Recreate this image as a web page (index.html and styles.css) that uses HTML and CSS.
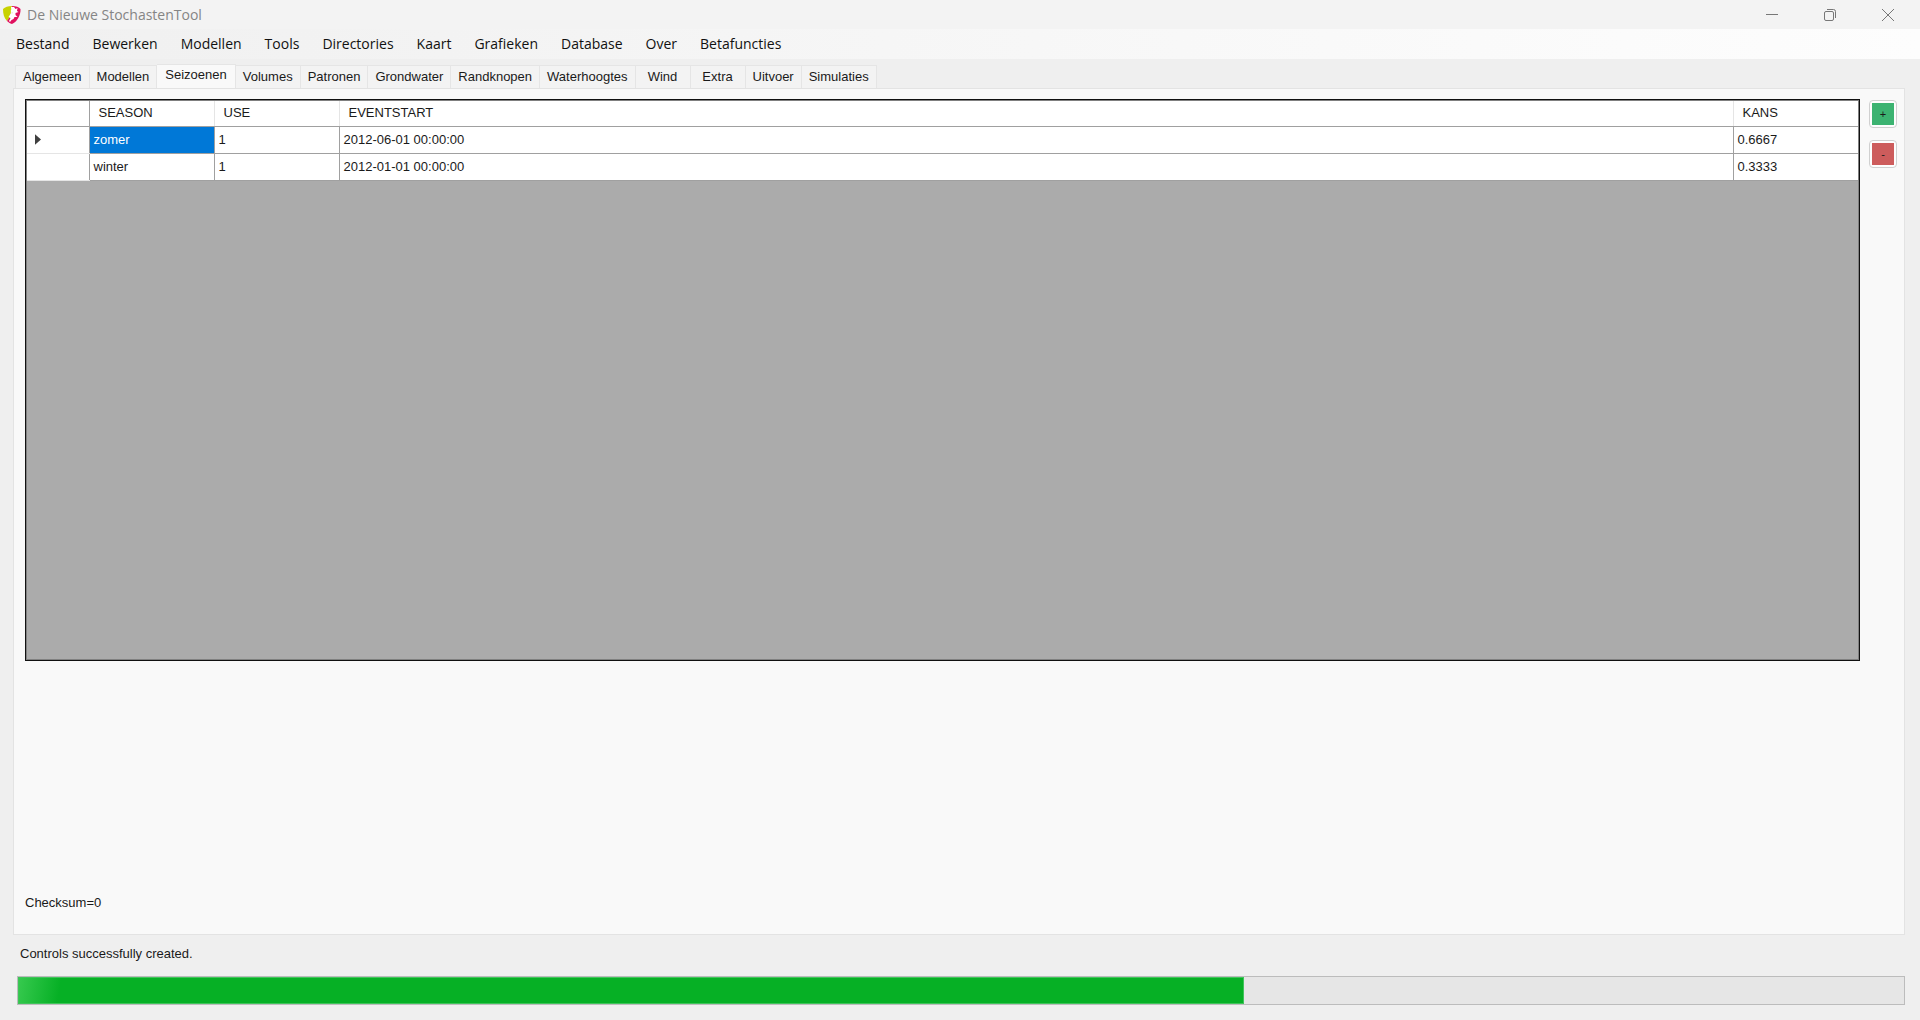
FILE: index.html
```html
<!DOCTYPE html>
<html lang="nl">
<head>
<meta charset="utf-8">
<title>De Nieuwe StochastenTool</title>
<link rel="stylesheet" href="styles.css">
</head>
<body>
<div class="window">
  <header class="titlebar">
    <svg class="logo" viewBox="0 0 18 20" aria-hidden="true">
      <path d="M9 1C5 1 2 2 0 4c0 5 1 9 4 12l3-4z" fill="#c8d200"/>
      <path d="M9 1c4 0 7 1 8.500 3C18 10 14 17 9 19c-2-.5-4-2-5-3l5-7z" fill="#e0115f"/>
      <path d="M8 2l3 0 1.500 2 2-1-.5 3 1.500 1-3 1 0 2 2 2-3 0-1 2-2 1-1.500 2-1-1 1.500-3-2-1 2-3 2-1-2-2 1-1z" fill="#fff"/>
    </svg>
    <h1 class="title">De Nieuwe StochastenTool</h1>
    <div class="caption-buttons">
      <button class="caption-button" aria-label="Minimaliseren"><svg viewBox="0 0 14 14"><path d="M1 6.500h12"/></svg></button>
      <button class="caption-button" aria-label="Verkleinen"><svg viewBox="0 0 14 14"><rect x="1.500" y="3.500" width="9" height="9" rx="1.500"/><path d="M4 1.500h6.500a2 2 0 0 1 2 2V10"/></svg></button>
      <button class="caption-button" aria-label="Sluiten"><svg viewBox="0 0 14 14"><path d="M1 1l12 12M13 1L1 13"/></svg></button>
    </div>
  </header>
  <nav class="menubar" aria-label="Menu">
    <button class="menu-item">Bestand</button>
    <button class="menu-item">Bewerken</button>
    <button class="menu-item">Modellen</button>
    <button class="menu-item">Tools</button>
    <button class="menu-item">Directories</button>
    <button class="menu-item">Kaart</button>
    <button class="menu-item">Grafieken</button>
    <button class="menu-item">Database</button>
    <button class="menu-item">Over</button>
    <button class="menu-item">Betafuncties</button>
  </nav>
  <main class="content">
    <div class="tabs" role="tablist">
      <button class="tab" role="tab">Algemeen</button>
      <button class="tab" role="tab">Modellen</button>
      <button class="tab tab-selected" role="tab" aria-selected="true">Seizoenen</button>
      <button class="tab" role="tab">Volumes</button>
      <button class="tab" role="tab">Patronen</button>
      <button class="tab" role="tab">Grondwater</button>
      <button class="tab" role="tab">Randknopen</button>
      <button class="tab" role="tab">Waterhoogtes</button>
      <button class="tab" role="tab">Wind</button>
      <button class="tab" role="tab">Extra</button>
      <button class="tab" role="tab">Uitvoer</button>
      <button class="tab" role="tab">Simulaties</button>
    </div>
    <section class="panel" role="tabpanel">
      <div class="editor">
        <div class="grid">
          <table class="seasons">
            <colgroup><col class="col-marker"><col class="col-value"><col class="col-value"><col><col class="col-value"></colgroup>
            <thead>
              <tr><td></td><th scope="col">SEASON</th><th scope="col">USE</th><th scope="col">EVENTSTART</th><th scope="col">KANS</th></tr>
            </thead>
            <tbody>
              <tr><td class="marker"><svg class="arrow" viewBox="0 0 7 12" aria-hidden="true"><path d="M0 0l7 6-7 6z"/></svg></td><td class="cell-selected">zomer</td><td>1</td><td>2012-06-01 00:00:00</td><td>0.6667</td></tr>
              <tr><td class="marker"></td><td>winter</td><td>1</td><td>2012-01-01 00:00:00</td><td>0.3333</td></tr>
            </tbody>
          </table>
        </div>
        <div class="row-actions">
          <button class="action"><span class="face face-add">+</span></button>
          <button class="action"><span class="face face-remove">-</span></button>
        </div>
      </div>
      <p class="checksum">Checksum=0</p>
    </section>
  </main>
  <footer class="status">
    <p class="message" id="message">Controls successfully created.</p>
    <div class="progress" role="progressbar" aria-labelledby="message" aria-valuenow="65"><div class="progress-fill" style="width: 65%"></div></div>
  </footer>
</div>
</body>
</html>
```
FILE: styles.css
```css
* { box-sizing: border-box; }
body {
  margin: 0;
  background: #efefef;
  color: #1a1a1a;
  font: 13px/16px "Liberation Sans", Arial, sans-serif;
}
button {
  margin: 0;
  border: 0;
  padding: 0;
  background: none;
  color: inherit;
  font: inherit;
}
p { margin: 0; }
.window { display: flex; flex-direction: column; min-height: 100vh; }

.titlebar { display: flex; align-items: center; height: 29px; padding-left: 3px; background: #f3f3f3; }
.logo { width: 18px; height: 20px; }
.title {
  flex: 1;
  margin: 0 0 0 6px;
  color: #858585;
  font: 14px/20px "Open Sans", "Noto Sans", sans-serif;
}
.caption-buttons { display: flex; margin-right: 3px; }
.caption-button { display: flex; align-items: center; justify-content: center; width: 58px; height: 29px; }
.caption-button svg { width: 14px; height: 14px; fill: none; stroke: #777; }

.menubar {
  display: flex;
  gap: 23px;
  height: 30px;
  padding: 0 16px;
  background: linear-gradient(90deg, #f0f0f0, #fdfdfd);
  color: #111;
  font: 14px/28px "Open Sans", "Noto Sans", sans-serif;
}

.content { display: flex; flex: 1; flex-direction: column; padding: 4px 15px 0 13px; }
.tabs { display: flex; align-items: flex-end; height: 25px; padding-left: 2px; }
.tab {
  min-width: 55px;
  height: 23px;
  padding: 0 7px;
  border: 1px solid #e5e5e5;
  border-width: 1px 1px 0 0;
  background: #f3f3f3;
}
.tab:first-child { border-left-width: 1px; }
.tab-selected { height: 25px; margin-bottom: -1px; padding: 0 8px 4px; background: #f9f9f9; }
.panel {
  display: flex;
  flex: 1;
  flex-direction: column;
  padding: 10px 7px 23px 11px;
  border: 1px solid #e3e3e3;
  background: #f9f9f9;
}
.editor { display: flex; flex: 1; gap: 9px; }
.grid { flex: 1; border: 1px solid #111; outline: 1px solid #808080; outline-offset: -2px; padding: 1px; background: #ababab; }
.seasons { width: 100%; border-collapse: collapse; table-layout: fixed; background: #fff; }
.col-marker { width: 62px; }
.col-value { width: 125px; }
.seasons th, .seasons td { height: 27px; padding: 0 4px; border-right: 1px solid #a0a0a0; border-bottom: 1px solid #a0a0a0; text-align: left; }
.seasons th { padding: 0 9px; border-right-color: #e5e5e5; font-weight: 400; }
.seasons thead td, .seasons thead th { height: 25px; }
.seasons tr > :last-child { border-right: 0; }
.seasons .marker { border-bottom-color: #e5e5e5; padding-left: 8px; }
.seasons .cell-selected { background: #0078d7; color: #fff; }
.arrow { display: block; width: 6px; height: 11px; fill: #404040; }
.row-actions { display: flex; flex-direction: column; gap: 12px; padding-top: 1px; }
.action {
  width: 28px;
  height: 28px;
  padding: 2px;
  border: 1px solid #d0d0d0;
  border-radius: 4px;
  background: #fdfdfd;
  font-size: 11px;
}
.face { display: grid; place-items: center; height: 22px; }
.face-add { background: #3cb371; }
.face-remove { background: #cd5c5c; }
.checksum { margin-top: 234px; }

.status { padding: 11px 15px 15px 17px; }
.message { margin: 0 3px 14px; }
.progress { height: 29px; border: 1px solid #bcbcbc; background: #e6e6e6; }
.progress-fill {
  height: 100%;
  border: 1px solid #3fc45a;
  background: linear-gradient(100deg, #36c94e, #06b025 42px);
}
```
